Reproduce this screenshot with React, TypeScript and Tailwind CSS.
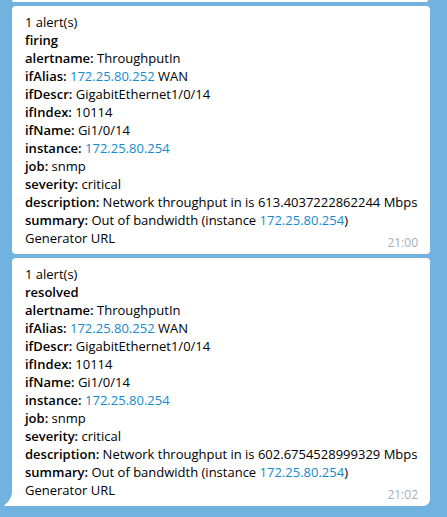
import React from "react"

type Field = { label: string; parts: { text: string; link?: boolean }[] }

const ip = (t: string) => ({ text: t, link: true })
const tx = (t: string) => ({ text: t })

function fields(description: string): Field[] {
  return [
    { label: "alertname", parts: [tx("ThroughputIn")] },
    { label: "ifAlias", parts: [ip("172.25.80.252"), tx(" WAN")] },
    { label: "ifDescr", parts: [tx("GigabitEthernet1/0/14")] },
    { label: "ifIndex", parts: [tx("10114")] },
    { label: "ifName", parts: [tx("Gi1/0/14")] },
    { label: "instance", parts: [ip("172.25.80.254")] },
    { label: "job", parts: [tx("snmp")] },
    { label: "severity", parts: [tx("critical")] },
    { label: "description", parts: [tx(description)] },
    { label: "summary", parts: [tx("Out of bandwidth (instance "), ip("172.25.80.254"), tx(")")] },
  ]
}

function Bubble({ status, value, time, tail }: { status: string; value: string; time: string; tail?: boolean }) {
  return (
    <div className="relative">
      <div
        className={
          "relative ml-[12px] w-[418px] bg-white pl-[13px] pr-3 pt-[7px] pb-[7px] text-[13px] leading-[18px] text-black " +
          (tail ? "rounded-[4px] rounded-br-[7px] rounded-bl-none" : "rounded-[4px]")
        }
      >
        <div>1 alert(s)</div>
        <div className="font-semibold">{status}</div>
        {fields(`Network throughput in is ${value} Mbps`).map((f) => (
          <div key={f.label} className="whitespace-nowrap">
            <span className="font-semibold">{f.label}:</span>{" "}
            {f.parts.map((p, i) =>
              p.link ? (
                <span key={i} className="text-[#168acd]">{p.text}</span>
              ) : (
                <span key={i}>{p.text}</span>
              )
            )}
          </div>
        ))}
        <div>Generator URL</div>
        <div className="absolute bottom-[4px] right-[12px] text-[12px] leading-[14px] text-[#a3afb9]">{time}</div>
      </div>
      {tail && (
        <svg className="absolute bottom-0 left-[4px]" width="9" height="14" viewBox="0 0 9 14">
          <path d="M8 0 V14 H1 C0.3 14 0 13.4 0.6 12.9 C4.5 10 7.5 6 8 0 Z" fill="#ffffff" />
        </svg>
      )}
    </div>
  )
}

export default function App() {
  return (
    <div
      className="h-[517px] w-[447px] overflow-hidden bg-[#72b2df]"
      style={{ fontFamily: '"Open Sans", "Noto Sans", sans-serif' }}
    >
      <div className="ml-[12px] h-[2px] w-[416px] rounded-b-[3px] bg-white" />
      <div className="mt-[4px] flex flex-col gap-[4px]">
        <Bubble status="firing" value="613.4037222862244" time="21:00" />
        <Bubble status="resolved" value="602.6754528999329" time="21:02" tail />
      </div>
    </div>
  )
}
